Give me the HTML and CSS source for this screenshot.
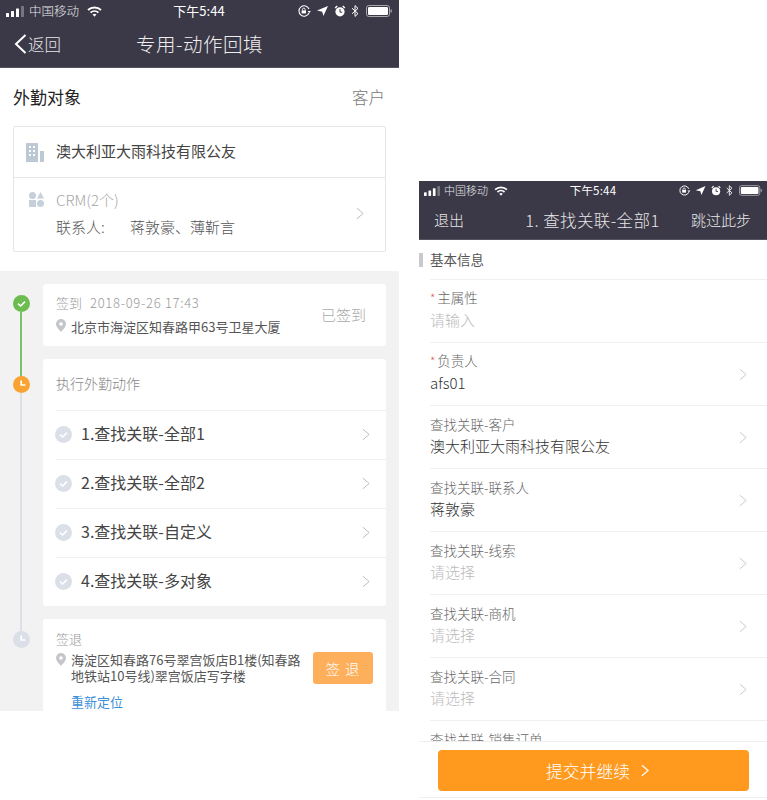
FILE: index.html
```html
<!DOCTYPE html>
<html lang="zh-CN">
<head>
    <meta charset="UTF-8">
    <meta name="viewport" content="width=device-width, initial-scale=1.0">
    <title>专用-动作回填</title>
    <link rel="stylesheet" href="styles.css">
</head>
<body>
    <!-- Shared icons -->
    <svg class="defs" width="0" height="0">
        <symbol id="i-signal" viewBox="0 0 18 11">
            <rect x="0" y="7" width="3" height="4" rx="0.5" fill="#fff"/>
            <rect x="5" y="5" width="3" height="6" rx="0.5" fill="#fff"/>
            <rect x="10" y="2.5" width="3" height="8.5" rx="0.5" fill="#fff"/>
            <rect x="15" y="0" width="3" height="11" rx="0.5" fill="#77757f"/>
        </symbol>
        <symbol id="i-wifi" viewBox="0 0 15 11">
            <path d="M1 4 A9.5 9.5 0 0 1 14 4" fill="none" stroke="#fff" stroke-width="1.9"/>
            <path d="M3.6 6.6 A5.8 5.8 0 0 1 11.4 6.6" fill="none" stroke="#fff" stroke-width="1.9"/>
            <path d="M5.6 8.6 A2.8 2.8 0 0 1 9.4 8.6 L7.5 10.8 Z" fill="#fff"/>
        </symbol>
        <symbol id="i-status-right" viewBox="0 0 94 12">
            <path d="M11 8 A5.2 5.2 0 1 1 11 4" fill="none" stroke="#fff" stroke-width="1.1"/>
            <path d="M9.6 6 H13 L11.3 8 Z" fill="#fff"/>
            <rect x="3.6" y="5.4" width="4.4" height="3" fill="#fff"/>
            <path d="M4.5 5.4 V4.4 A1.3 1.3 0 0 1 7.1 4.4 V5.4" fill="none" stroke="#fff" stroke-width="0.9"/>
            <path d="M19 5.6 L30 1 L25.4 11 L24.2 6.8 Z" fill="#fff"/>
            <circle cx="42" cy="6.8" r="4.6" fill="#fff"/>
            <path d="M42 4 V7.2 H44.2" fill="none" stroke="#3b3947"/>
            <path d="M37.2 3 L39.2 1 M46.8 3 L44.8 1" stroke="#fff" stroke-width="1.4"/>
            <path d="M54 3.2 L60 8.6 L57 11.4 V0.6 L60 3.4 L54 8.8" fill="none" stroke="#fff"/>
            <rect x="68.5" y="0.5" width="23" height="11" rx="2.4" fill="none" stroke="#a9a8ae"/>
            <rect x="70" y="2" width="20" height="8" rx="1.2" fill="#fff"/>
            <rect x="92.5" y="4.5" width="1.3" height="3" fill="#a9a8ae"/>
        </symbol>
        <symbol id="i-chevron" viewBox="0 0 9 14">
            <path d="M1 1 L8 7 L1 13" fill="none" stroke="currentColor" stroke-width="1"/>
        </symbol>
        <symbol id="i-pin" viewBox="0 0 10 13">
            <path d="M5 0 A5 5 0 0 1 10 5 C10 8 6.5 11 5 13 C3.5 11 0 8 0 5 A5 5 0 0 1 5 0 Z M5 3.2 A1.8 1.8 0 1 0 5 6.8 A1.8 1.8 0 1 0 5 3.2 Z" fill="#c4c6ca" fill-rule="evenodd"/>
        </symbol>
        <symbol id="i-check" viewBox="0 0 17 17">
            <circle cx="8.5" cy="8.5" r="8.5" fill="currentColor"/>
            <path d="M5 8.7 L7.6 11 L12 6.6" fill="none" stroke="#fff" stroke-width="1.6"/>
        </symbol>
        <symbol id="i-clock" viewBox="0 0 17 17">
            <circle cx="8.5" cy="8.5" r="8.5" fill="currentColor"/>
            <path d="M8.2 4.6 V9 H12.4" fill="none" stroke="#fff" stroke-width="1.7"/>
        </symbol>
    </svg>

    <div class="page">
        <!-- Left phone: visit detail -->
        <div class="phone-left">
            <div class="top-dark">
                <div class="status">
                    <div class="status-side">
                        <svg class="ic-signal"><use href="#i-signal"/></svg>
                        <span class="carrier">中国移动</span>
                        <svg class="ic-wifi"><use href="#i-wifi"/></svg>
                    </div>
                    <span class="clock">下午5:44</span>
                    <div class="status-side status-end">
                        <svg class="ic-status"><use href="#i-status-right"/></svg>
                    </div>
                </div>
                <div class="nav">
                    <div class="nav-back">
                        <svg class="ic-back" viewBox="0 0 13 20"><path d="M11.5 1 L2 10 L11.5 19" fill="none" stroke="#fff" stroke-width="2"/></svg>
                        <span>返回</span>
                    </div>
                    <span class="nav-title">专用-动作回填</span>
                    <span></span>
                </div>
            </div>

            <div class="target-head">
                <span class="target-title">外勤对象</span>
                <span class="target-type">客户</span>
            </div>

            <div class="target-card">
                <div class="company-row">
                    <svg class="ic-building" viewBox="0 0 18 19">
                        <path d="M0 1 A1 1 0 0 1 1 0 H11 A1 1 0 0 1 12 1 V19 H0 Z" fill="#bcc8d4"/>
                        <path d="M14 8 H18 V18 A1 1 0 0 1 17 19 H14 Z" fill="#bcc8d4"/>
                        <path d="M3 4 H5 M7 4 H9 M3 8 H5 M7 8 H9 M3 12 H5 M7 12 H9" stroke="#fff" stroke-width="2"/>
                    </svg>
                    <span class="company-name">澳大利亚大雨科技有限公友</span>
                </div>
                <div class="crm-row">
                    <svg class="ic-shapes" viewBox="0 0 15 15">
                        <circle cx="3.5" cy="3.5" r="3.5" fill="#c6d0da"/>
                        <path d="M11.5 0 L15 6.5 H8 Z" fill="#c6d0da"/>
                        <rect x="0" y="8" width="7" height="7" fill="#c6d0da"/>
                        <circle cx="11.5" cy="11.5" r="3.5" fill="#c6d0da"/>
                    </svg>
                    <div class="crm-text">
                        <div class="crm-count">CRM(2个)</div>
                        <div class="crm-people"><span class="crm-label">联系人:</span><span>蒋敦豪、薄靳言</span></div>
                    </div>
                    <svg class="chevron chevron-crm"><use href="#i-chevron"/></svg>
                </div>
            </div>

            <div class="timeline">
                <div class="tl-row">
                    <div class="tl-marker">
                        <span class="tl-top tl-top-first"></span>
                        <svg class="tl-dot dot-green"><use href="#i-check"/></svg>
                        <span class="tl-line line-green"></span>
                    </div>
                    <div class="tl-main">
                        <div class="card card-signin">
                            <div class="signin-text">
                                <div class="signin-meta"><span>签到</span><span class="signin-date">2018-09-26 17:43</span></div>
                                <div class="addr"><svg class="ic-pin"><use href="#i-pin"/></svg><span>北京市海淀区知春路甲63号卫星大厦</span></div>
                            </div>
                            <span class="signin-state">已签到</span>
                        </div>
                    </div>
                </div>

                <div class="tl-row">
                    <div class="tl-marker">
                        <span class="tl-top tl-top-mid line-green"></span>
                        <svg class="tl-dot dot-orange"><use href="#i-clock"/></svg>
                        <span class="tl-line line-gray"></span>
                    </div>
                    <div class="tl-main">
                        <div class="card">
                            <div class="action-head">执行外勤动作</div>
                            <div class="action-row">
                                <svg class="ic-done"><use href="#i-check"/></svg>
                                <span class="action-name">1.查找关联-全部1</span>
                                <svg class="chevron"><use href="#i-chevron"/></svg>
                            </div>
                            <div class="action-row">
                                <svg class="ic-done"><use href="#i-check"/></svg>
                                <span class="action-name">2.查找关联-全部2</span>
                                <svg class="chevron"><use href="#i-chevron"/></svg>
                            </div>
                            <div class="action-row">
                                <svg class="ic-done"><use href="#i-check"/></svg>
                                <span class="action-name">3.查找关联-自定义</span>
                                <svg class="chevron"><use href="#i-chevron"/></svg>
                            </div>
                            <div class="action-row">
                                <svg class="ic-done"><use href="#i-check"/></svg>
                                <span class="action-name">4.查找关联-多对象</span>
                                <svg class="chevron"><use href="#i-chevron"/></svg>
                            </div>
                        </div>
                    </div>
                </div>

                <div class="tl-row">
                    <div class="tl-marker">
                        <span class="tl-top tl-top-last line-gray"></span>
                        <svg class="tl-dot dot-gray"><use href="#i-clock"/></svg>
                    </div>
                    <div class="tl-main">
                        <div class="card card-signout">
                            <div class="signout-title">签退</div>
                            <div class="signout-body">
                                <div class="addr addr-wrap"><svg class="ic-pin"><use href="#i-pin"/></svg><span>海淀区知春路76号翠宫饭店B1楼(知春路地铁站10号线)翠宫饭店写字楼</span></div>
                                <button class="signout-btn">签 退</button>
                            </div>
                            <div class="relocate">重新定位</div>
                        </div>
                    </div>
                </div>
            </div>
        </div>

        <!-- Right phone: action form -->
        <div class="phone-right">
            <div class="top-dark top-dark-small">
                <div class="status status-small">
                    <div class="status-side">
                        <svg class="ic-signal"><use href="#i-signal"/></svg>
                        <span class="carrier">中国移动</span>
                        <svg class="ic-wifi"><use href="#i-wifi"/></svg>
                    </div>
                    <span class="clock">下午5:44</span>
                    <div class="status-side status-end">
                        <svg class="ic-status"><use href="#i-status-right"/></svg>
                    </div>
                </div>
                <div class="nav-form">
                    <span>退出</span>
                    <span class="nav-form-title">1. 查找关联-全部1</span>
                    <span class="nav-form-skip">跳过此步</span>
                </div>
            </div>

            <div class="form-body">
                <div class="section-title">基本信息</div>
                <div class="field">
                    <div class="field-text">
                        <div class="field-label"><span class="req">*</span>主属性</div>
                        <div class="field-value is-empty">请输入</div>
                    </div>
                </div>
                <div class="field">
                    <div class="field-text">
                        <div class="field-label"><span class="req">*</span>负责人</div>
                        <div class="field-value">afs01</div>
                    </div>
                    <svg class="chevron chevron-form"><use href="#i-chevron"/></svg>
                </div>
                <div class="field">
                    <div class="field-text">
                        <div class="field-label">查找关联-客户</div>
                        <div class="field-value">澳大利亚大雨科技有限公友</div>
                    </div>
                    <svg class="chevron chevron-form"><use href="#i-chevron"/></svg>
                </div>
                <div class="field">
                    <div class="field-text">
                        <div class="field-label">查找关联-联系人</div>
                        <div class="field-value">蒋敦豪</div>
                    </div>
                    <svg class="chevron chevron-form"><use href="#i-chevron"/></svg>
                </div>
                <div class="field">
                    <div class="field-text">
                        <div class="field-label">查找关联-线索</div>
                        <div class="field-value is-empty">请选择</div>
                    </div>
                    <svg class="chevron chevron-form"><use href="#i-chevron"/></svg>
                </div>
                <div class="field">
                    <div class="field-text">
                        <div class="field-label">查找关联-商机</div>
                        <div class="field-value is-empty">请选择</div>
                    </div>
                    <svg class="chevron chevron-form"><use href="#i-chevron"/></svg>
                </div>
                <div class="field">
                    <div class="field-text">
                        <div class="field-label">查找关联-合同</div>
                        <div class="field-value is-empty">请选择</div>
                    </div>
                    <svg class="chevron chevron-form"><use href="#i-chevron"/></svg>
                </div>
                <div class="field field-cut">
                    <div class="field-text">
                        <div class="field-label">查找关联-销售订单</div>
                    </div>
                </div>
            </div>

            <div class="form-foot">
                <button class="submit-btn">
                    <span>提交并继续</span>
                    <svg class="ic-submit" viewBox="0 0 9 14"><path d="M1 1 L8 7 L1 13" fill="none" stroke="#fff" stroke-width="1.4"/></svg>
                </button>
            </div>
        </div>
    </div>
</body>
</html>
```

FILE: styles.css
```css
* {
    box-sizing: border-box;
}
html, body {
    margin: 0;
    padding: 0;
    background-color: #fff;
}
body {
    font-family: "Noto Sans CJK SC", sans-serif;
    font-weight: 300;
    color: #333;
    width: 767px;
    height: 800px;
    overflow: hidden;
}
.defs {
    position: absolute;
}
svg {
    display: block;
    flex-shrink: 0;
}
.page {
    display: flex;
    align-items: flex-start;
    gap: 20px;
}

/* Dark top bars */
.top-dark {
    background-color: #3b3947;
    color: #fff;
    height: 68px;
    border-bottom: 1px solid #55535f;
}
.top-dark-small {
    height: 59px;
}
.status {
    display: grid;
    grid-template-columns: 1fr auto 1fr;
    align-items: center;
    height: 22px;
    padding: 0 7px 0 6px;
}
.status-side {
    display: flex;
    align-items: center;
}
.status-end {
    justify-content: flex-end;
}
.ic-signal {
    width: 18px;
    height: 11px;
}
.carrier {
    font-size: 12.5px;
    line-height: 22px;
    margin-left: 5px;
    color: #e6e6e8;
}
.ic-wifi {
    width: 15px;
    height: 11px;
    margin-left: 8px;
}
.clock {
    font-size: 13px;
    line-height: 22px;
    font-weight: 400;
}
.ic-status {
    width: 94px;
    height: 12px;
}
.status-small {
    height: 19px;
    padding: 0 5px 0 5px;
}
.status-small .ic-signal {
    width: 16px;
    height: 10px;
}
.status-small .carrier {
    font-size: 11px;
    line-height: 19px;
    margin-left: 4px;
}
.status-small .ic-wifi {
    width: 14px;
    height: 10px;
    margin-left: 6px;
}
.status-small .clock {
    font-size: 11.5px;
    line-height: 19px;
    letter-spacing: 0.2px;
}
.status-small .ic-status {
    width: 83px;
    height: 11px;
}
.nav {
    display: grid;
    grid-template-columns: 1fr auto 1fr;
    align-items: center;
    height: 44px;
    padding: 0 14px;
}
.nav-back {
    display: flex;
    align-items: center;
    gap: 1px;
    font-size: 16.5px;
    line-height: 24px;
    color: #e6e6e8;
}
.ic-back {
    width: 13px;
    height: 20px;
}
.nav-title {
    font-size: 19.5px;
    line-height: 26px;
    letter-spacing: 0.5px;
    color: #eee;
}

/* Left phone */
.phone-left {
    width: 399px;
    height: 711px;
    background-color: #fff;
    overflow: hidden;
}
.target-head {
    display: flex;
    justify-content: space-between;
    align-items: center;
    height: 58px;
    padding: 0 14px 1px 13px;
}
.target-title {
    font-size: 17px;
    line-height: 24px;
    font-weight: 400;
    color: #222;
}
.target-type {
    font-size: 16.5px;
    line-height: 24px;
    color: #777;
}
.target-card {
    margin: 0 13px;
    height: 126px;
    border: 1px solid #e6e6e6;
    border-radius: 2px;
}
.company-row {
    display: flex;
    align-items: center;
    height: 51px;
    padding-left: 12px;
    border-bottom: 1px solid #e6e6e6;
}
.ic-building {
    width: 18px;
    height: 19px;
}
.company-name {
    margin: 0 0 3px 12px;
    font-size: 15px;
    line-height: 22px;
    font-weight: 400;
    color: #444;
}
.crm-row {
    display: flex;
    align-items: flex-start;
    height: 73px;
    padding: 14px 0 0 15px;
}
.ic-shapes {
    width: 15px;
    height: 15px;
}
.crm-text {
    flex: 1;
    margin-left: 12px;
    margin-top: -3px;
    font-size: 15px;
    line-height: 22px;
}
.crm-count {
    color: #a5a5a5;
}
.crm-people {
    display: flex;
    margin-top: 5px;
    color: #555;
}
.crm-label {
    width: 74px;
}
.chevron {
    width: 8px;
    height: 13px;
    color: #b5b5b5;
}
.chevron-crm {
    margin: 15px 21px 0 0;
}

/* Timeline */
.timeline {
    margin-top: 19px;
    padding-top: 13px;
    background-color: #f2f2f2;
    height: 440px;
    overflow: hidden;
    padding-right: 13px;
}
.tl-row {
    display: flex;
}
.tl-marker {
    display: flex;
    flex-direction: column;
    align-items: center;
    width: 43px;
    padding-right: 1px;
}
.tl-top {
    width: 1.5px;
    flex-shrink: 0;
}
.tl-top-first {
    height: 11px;
}
.tl-top-mid {
    height: 17px;
}
.tl-top-last {
    height: 12px;
}
.tl-dot {
    width: 17px;
    height: 17px;
}
.tl-line {
    width: 1.5px;
    flex: 1;
}
.line-green {
    background-color: #7cc26a;
}
.line-gray {
    background-color: #dde1e7;
}
.dot-green {
    color: #6cbc50;
}
.dot-orange {
    color: #f9a332;
}
.dot-gray {
    color: #dbe0e8;
}
.tl-main {
    flex: 1;
    padding-bottom: 13px;
}
.card {
    background-color: #fff;
    border-radius: 3px;
}
.card-signin {
    display: flex;
    justify-content: space-between;
    align-items: center;
    height: 62px;
    padding: 0 20px 0 13px;
}
.signin-meta {
    display: flex;
    gap: 8px;
    margin-top: -1px;
    font-size: 13px;
    line-height: 18px;
    color: #999;
}
.signin-date {
    letter-spacing: 0.7px;
}
.addr {
    display: flex;
    align-items: flex-start;
    margin-top: 6px;
    font-size: 13px;
    line-height: 17px;
    font-weight: 400;
    color: #555;
}
.ic-pin {
    width: 10px;
    height: 13px;
    margin: 1px 5px 0 0;
}
.signin-state {
    font-size: 15px;
    line-height: 22px;
    color: #aaa;
}
.action-head {
    height: 51px;
    padding-left: 13px;
    font-size: 14px;
    line-height: 49px;
    color: #888;
}
.action-row {
    display: flex;
    align-items: center;
    height: 49px;
    margin-left: 13px;
    padding: 0 16px 2px 0;
    border-top: 1px solid #f0f0f0;
}
.ic-done {
    width: 17px;
    height: 17px;
    margin-left: -1px;
    color: #dbe0e8;
}
.action-name {
    flex: 1;
    margin: 0 0 2px 9px;
    font-size: 16px;
    line-height: 22px;
    font-weight: 400;
    color: #444;
}
.card-signout {
    height: 100px;
    padding: 10px 13px 0;
}
.signout-title {
    font-size: 13px;
    line-height: 20px;
    color: #999;
}
.signout-body {
    display: flex;
    align-items: flex-start;
    gap: 8px;
    margin-top: 3px;
}
.addr-wrap {
    flex: 1;
    margin-top: 0;
    line-height: 16px;
}
.signout-btn {
    width: 60px;
    height: 32px;
    flex-shrink: 0;
    border: none;
    border-radius: 3px;
    background-color: #fdaf5b;
    color: #fff;
    font-family: inherit;
    font-size: 14.5px;
    font-weight: 300;
    letter-spacing: 1px;
    padding: 0;
}
.relocate {
    margin: 9px 0 0 15px;
    font-size: 13px;
    line-height: 18px;
    font-weight: 400;
    color: #3d8fd6;
}

/* Right phone */
.phone-right {
    width: 348px;
    height: 619px;
    margin-top: 181px;
    background-color: #fff;
    display: flex;
    flex-direction: column;
}
.nav-form {
    display: grid;
    grid-template-columns: 1fr auto 1fr;
    align-items: center;
    height: 39px;
    padding: 0 16px 0 15px;
    font-size: 15px;
    line-height: 22px;
    color: #e6e6e8;
}
.nav-form-title {
    font-size: 16.5px;
    letter-spacing: 0.4px;
}
.nav-form-skip {
    text-align: right;
}
.form-body {
    height: 501px;
    overflow: hidden;
}
.section-title {
    position: relative;
    display: flex;
    align-items: center;
    height: 39px;
    padding: 0 0 2px 11px;
    font-size: 13.5px;
    line-height: 20px;
    font-weight: 400;
    color: #555;
}
.section-title:before {
    content: "";
    width: 4px;
    height: 14px;
    background-color: #c9c9cc;
    position: absolute;
    left: 0;
    top: 13px;
}
.field {
    display: flex;
    align-items: center;
    height: 63px;
    margin-left: 11px;
    padding-right: 20px;
    border-top: 1px solid #f0f0f0;
}
.field-cut {
    align-items: flex-start;
    padding-top: 8px;
}
.field-text {
    flex: 1;
    margin-bottom: 4px;
}
.field-label {
    font-size: 13.5px;
    line-height: 20px;
    color: #666;
}
.req {
    color: #e0605c;
    font-size: 12px;
    margin-right: 2px;
}
.field-value {
    margin-top: 1px;
    font-size: 15px;
    line-height: 22px;
    color: #333;
}
.is-empty {
    color: #bbb;
}
.chevron-form {
    width: 8px;
    height: 13px;
    color: #c4c4c4;
}
.form-foot {
    height: 59px;
    padding: 8px 19px 0;
    border-top: 1px solid #eee;
    position: relative;
}
.form-foot:after {
    content: "";
    position: absolute;
    left: 0;
    right: 0;
    bottom: 2px;
    height: 1px;
    background-color: #eee;
}
.submit-btn {
    display: flex;
    justify-content: center;
    align-items: center;
    gap: 11px;
    width: 311px;
    height: 41px;
    border: none;
    border-radius: 4px;
    background-color: #ff9a1f;
    color: #fff;
    font-family: inherit;
    font-size: 16.8px;
    font-weight: 300;
    padding: 0 0 0 8px;
}
.ic-submit {
    width: 8px;
    height: 13px;
}
```
